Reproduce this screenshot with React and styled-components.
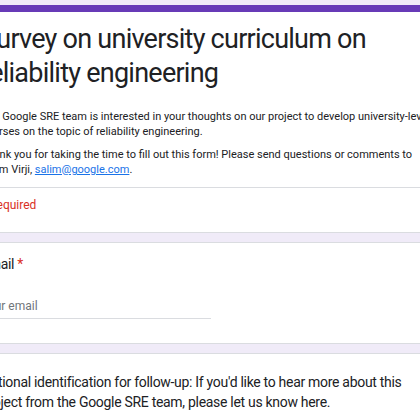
import React from 'react';
import styled, { createGlobalStyle } from 'styled-components';

const GlobalStyle = createGlobalStyle`
  html, body {
    margin: 0;
    padding: 0;
    background: #f0ebf8;
    overflow: hidden;
  }
`;

const Form = styled.div`
  width: 540px;
  margin-left: -44px;
  padding-top: 5px;
  display: flex;
  flex-direction: column;
  gap: 9px;
`;

const Card = styled.div`
  background: #fff;
  border: 1px solid #dadce0;
  border-radius: 8px;
  border-top: ${({ accent }) => (accent ? '7px solid #673ab7' : '1px solid #dadce0')};
`;

const Section = styled.div`
  padding: ${({ pad }) => pad || '0 24px'};
`;

const Title = styled.h1`
  margin: 0;
  font-family: Roboto, "Liberation Sans", sans-serif;
  font-weight: 400;
  font-size: 27px;
  letter-spacing: -0.75px;
  line-height: 34px;
  color: #202124;
  white-space: nowrap;
`;

const Desc = styled.p`
  margin: ${({ first }) => (first ? '19px 0 0' : '8px 0 0')};
  font-family: Roboto, "Liberation Sans", sans-serif;
  font-size: 11px;
  line-height: 15px;
  color: #202124;
  white-space: nowrap;
`;

const Mail = styled.a`
  color: #1a73e8;
  text-decoration: underline;
`;

const Divider = styled.div`
  height: 1px;
  background: #dadce0;
  margin-top: 10px;
`;

const Required = styled.div`
  font-family: Roboto, "Liberation Sans", sans-serif;
  font-size: 12px;
  line-height: 16px;
  color: #d93025;
  padding: 9px 24px 19px;
`;

const Label = styled.div`
  font-family: Roboto, "Liberation Sans", sans-serif;
  font-size: 14px;
  letter-spacing: -0.3px;
  line-height: 20px;
  color: #202124;
  white-space: nowrap;
`;

const Star = styled.span`
  color: #d93025;
`;

const Input = styled.div`
  width: 230px;
  margin-top: 24px;
  padding-bottom: 4px;
  border-bottom: 1px solid #dadce0;
  font-family: Roboto, "Liberation Sans", sans-serif;
  font-size: 12px;
  line-height: 16px;
  color: #70757a;
`;

export default function App() {
  return (
    <>
      <GlobalStyle />
      <Form>
        <Card accent>
          <Section pad="10px 24px 0">
            <Title>
              Survey on university curriculum on
              <br />
              reliability engineering
            </Title>
            <Desc first>
              The Google SRE team is interested in your thoughts on our project to develop university-level
              <br />
              courses on the topic of reliability engineering.
            </Desc>
            <Desc>
              Thank you for taking the time to fill out this form! Please send questions or comments to
              <br />
              Salim Virji, <Mail href="#">salim@google.com</Mail>.
            </Desc>
          </Section>
          <Divider />
          <Required>* Required</Required>
        </Card>
        <Card>
          <Section pad="11px 24px 24px">
            <Label>
              Email <Star>*</Star>
            </Label>
            <Input>Your email</Input>
          </Section>
        </Card>
        <Card>
          <Section pad="18px 24px 40px">
            <Label>
              Optional identification for follow-up: If you'd like to hear more about this
              <br />
              project from the Google SRE team, please let us know here.
            </Label>
          </Section>
        </Card>
      </Form>
    </>
  );
}
